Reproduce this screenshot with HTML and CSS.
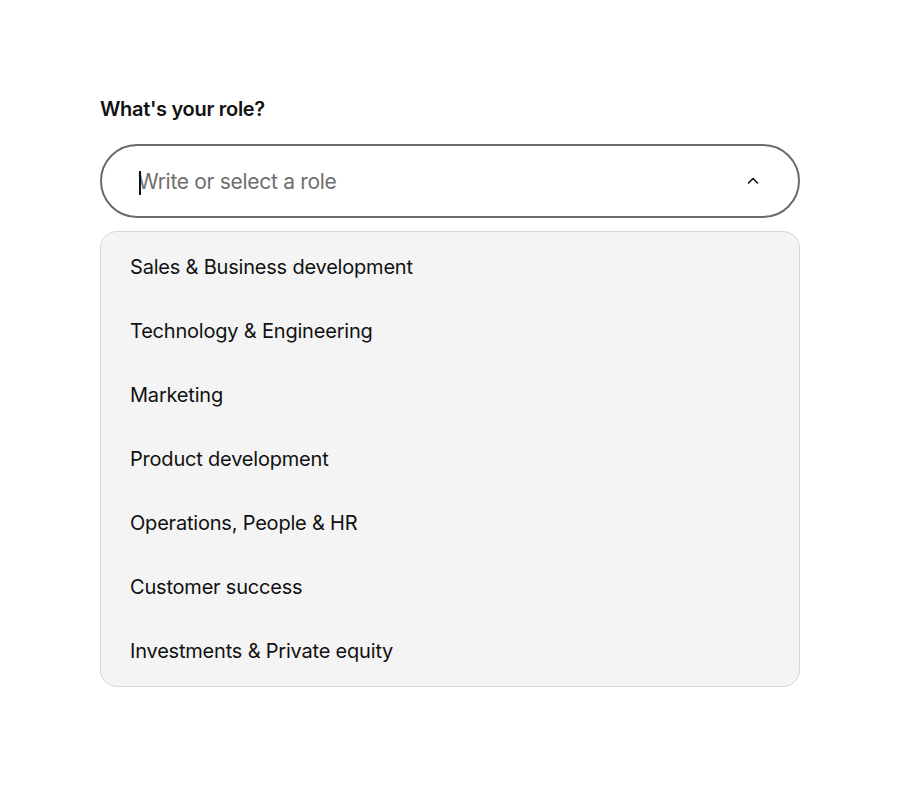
FILE: index.html
```html
<!DOCTYPE html>
<html lang="en">
<head>
  <meta charset="UTF-8">
  <meta name="viewport" content="width=device-width, initial-scale=1.0">
  <title>Role</title>
  <link rel="stylesheet" href="styles.css">
</head>
<body>
  <div class="role-field">
    <label class="role-label" for="role">What's your role?</label>

    <!-- Combobox -->
    <div class="combo">
      <span class="caret"></span>
      <input type="text" id="role" placeholder="Write or select a role">
      <svg class="chevron" width="14" height="14" viewBox="0 0 14 14">
        <path d="M2.5 9 L7 4.5 L11.5 9" fill="none" stroke="#111" stroke-width="1.6" stroke-linecap="round" stroke-linejoin="round"/>
      </svg>
    </div>

    <!-- Options -->
    <ul class="options">
      <li>Sales &amp; Business development</li>
      <li>Technology &amp; Engineering</li>
      <li>Marketing</li>
      <li>Product development</li>
      <li>Operations, People &amp; HR</li>
      <li>Customer success</li>
      <li>Investments &amp; Private equity</li>
    </ul>
  </div>
</body>
</html>
```

FILE: styles.css
```css
body {
  font-family: 'Inter', 'Liberation Sans', sans-serif;
  background-color: #fff;
  margin: 0;
  padding: 0;
  color: #111;
}

.role-field {
  width: 700px;
  margin: 97px 0 0 100px;
}

.role-label {
  display: block;
  font-size: 20px;
  font-weight: 600;
  letter-spacing: -0.3px;
  margin-bottom: 23px;
}

.combo {
  position: relative;
  display: flex;
  align-items: center;
  height: 74px;
  box-sizing: border-box;
  border: 2px solid #6a6a6a;
  border-radius: 37px;
  padding: 0 36px 0 36px;
}

.combo input {
  flex: 1;
  border: none;
  outline: none;
  background: transparent;
  font-family: inherit;
  font-size: 21px;
  color: #111;
  padding: 0;
  letter-spacing: -0.3px;
}

.combo input::placeholder {
  color: #6e6e6e;
}

.caret {
  position: absolute;
  left: 37px;
  top: 25px;
  width: 1.5px;
  height: 24px;
  background-color: #111;
}

.chevron {
  margin-right: 2px;
}

.options {
  list-style: none;
  margin: 13px 0 0 0;
  padding: 3px 0;
  background-color: #f4f4f4;
  border: 1px solid #d6d6d6;
  border-radius: 17px;
}

.options li {
  height: 64px;
  line-height: 64px;
  padding-left: 29px;
  font-size: 20px;
  letter-spacing: -0.2px;
}
```
